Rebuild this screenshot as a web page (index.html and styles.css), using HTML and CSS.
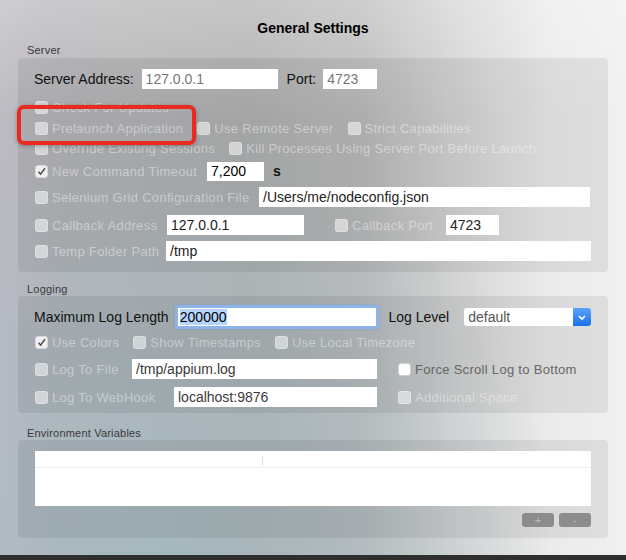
FILE: index.html
```html
<!DOCTYPE html>
<html lang="en">
<head>
  <meta charset="UTF-8" />
  <title>General Settings</title>
  <link rel="stylesheet" href="styles.css">
</head>
<body>
  <div class="window">
    <h1 class="title">General Settings</h1>

    <div class="section-label">Server</div>
    <div class="group server">
      <div class="row addr-row">
        <span class="field-label">Server Address:</span>
        <div class="field dim addr">127.0.0.1</div>
        <span class="field-label port-label">Port:</span>
        <div class="field dim port">4723</div>
      </div>
      <div class="row updates-row">
        <label class="check"><span class="box"></span>Check For Updates</label>
      </div>
      <div class="row flags-row">
        <label class="check"><span class="box"></span>Prelaunch Application</label>
        <label class="check"><span class="box"></span>Use Remote Server</label>
        <label class="check"><span class="box"></span>Strict Capabilities</label>
      </div>
      <div class="row">
        <label class="check"><span class="box"></span>Override Existing Sessions</label>
        <label class="check"><span class="box"></span>Kill Processes Using Server Port Before Launch</label>
      </div>
      <div class="row field-row timeout-row">
        <label class="check col-timeout"><span class="box on"><svg viewBox="0 0 13 13"><path d="M3 6.8l2.4 2.8L10.6 2.6"/></svg></span>New Command Timeout</label>
        <div class="field timeout">7,200</div>
        <span class="unit">s</span>
      </div>
      <div class="row field-row grid-row">
        <label class="check col-grid"><span class="box"></span>Selenium Grid Configuration File</label>
        <div class="field grid-path">/Users/me/nodeconfig.json</div>
      </div>
      <div class="row field-row callback-row">
        <label class="check col-a"><span class="box"></span>Callback Address</label>
        <div class="field callback">127.0.0.1</div>
        <label class="check col-port"><span class="box"></span>Callback Port</label>
        <div class="field callback-port">4723</div>
      </div>
      <div class="row field-row tmp-row">
        <label class="check col-a"><span class="box"></span>Temp Folder Path</label>
        <div class="field tmp">/tmp</div>
      </div>
    </div>

    <div class="section-label logging-label">Logging</div>
    <div class="group logging">
      <div class="row loglen-row">
        <span class="field-label col-len">Maximum Log Length</span>
        <div class="field focus"><span class="selected">200000</span></div>
        <span class="field-label level-label">Log Level</span>
        <div class="select">
          <span class="select-value">default</span>
          <span class="select-arrow"><svg viewBox="0 0 10 7"><path d="M2 2l3 3 3-3"/></svg></span>
        </div>
      </div>
      <div class="row colors-row">
        <label class="check"><span class="box on"><svg viewBox="0 0 13 13"><path d="M3 6.8l2.4 2.8L10.6 2.6"/></svg></span>Use Colors</label>
        <label class="check"><span class="box"></span>Show Timestamps</label>
        <label class="check"><span class="box"></span>Use Local Timezone</label>
      </div>
      <div class="row field-row file-row">
        <label class="check col-file"><span class="box"></span>Log To File</label>
        <div class="field dark log-file">/tmp/appium.log</div>
        <label class="check enabled side"><span class="box white"></span>Force Scroll Log to Bottom</label>
      </div>
      <div class="row field-row hook-row">
        <label class="check col-hook"><span class="box"></span>Log To WebHook</label>
        <div class="field dark hook">localhost:9876</div>
        <label class="check side"><span class="box"></span>Additional Space</label>
      </div>
    </div>

    <div class="section-label env-label">Environment Variables</div>
    <div class="group env">
      <div class="table">
        <div class="table-head"><span class="col-sep"></span></div>
      </div>
      <div class="table-buttons">
        <span class="btn">+</span>
        <span class="btn">-</span>
      </div>
    </div>

    <div class="callout"></div>
  </div>
</body>
</html>
```

FILE: styles.css
```css
* {
  box-sizing: border-box;
}

body {
  margin: 0;
  background: #2f2f2f;
  font-family: "Liberation Sans", Arial, sans-serif;
}

.window {
  position: relative;
  width: 626px;
  height: 555px;
  overflow: hidden;
  padding-top: 18px;
  background:
    linear-gradient(to bottom, rgba(255, 255, 255, 0.28), rgba(255, 255, 255, 0) 120px),
    radial-gradient(ellipse at 25% 100%, rgba(150, 190, 205, 0.45), rgba(150, 190, 205, 0) 60%),
    linear-gradient(to right, #bdbac2 0%, #b6b5b9 8%, #b1b1b1 40%, #bbbbbb 58%, #d6d6d6 74%, #ebebeb 88%, #f0f0f0 100%);
}

.title {
  margin: 0;
  height: 20px;
  line-height: 20px;
  font-size: 14px;
  font-weight: bold;
  text-align: center;
  color: #000;
}

.section-label {
  margin: 5px 0 1px 27px;
  height: 14px;
  line-height: 14px;
  font-size: 11px;
  letter-spacing: 0.2px;
  color: #3a3a3a;
}

.logging-label {
  margin-top: 10px;
  margin-bottom: 0;
}

.env-label {
  margin-top: 13px;
  margin-bottom: 0;
}

.group {
  margin: 0 18px;
  border-radius: 4px;
  background: rgba(0, 0, 0, 0.07);
  padding: 9px 17px 10px 16px;
}

.logging {
  padding-bottom: 5px;
}

.env {
  padding: 11px 17px 11px 17px;
}

.row {
  display: flex;
  align-items: center;
  height: 20px;
  white-space: nowrap;
}

.field-row {
  height: 22px;
}

.addr-row { height: 24px; }
.updates-row { margin-top: 6px; }
.flags-row { margin-top: 1px; }
.timeout-row { margin-top: 2px; }
.grid-row { margin-top: 4px; }
.callback-row { margin-top: 6px; }
.tmp-row { margin-top: 4px; }

.loglen-row { height: 24px; }
.colors-row { margin-top: 3px; }
.file-row { margin-top: 6px; }
.hook-row { margin-top: 6px; }

.field-label {
  font-size: 14px;
  color: #111;
}

.port-label { margin-left: 9px; }
.level-label { margin-left: 9px; }
.col-len { width: 141px; }

/* checkboxes */
.check {
  display: flex;
  align-items: center;
  margin-left: 1px;
  font-size: 13px;
  letter-spacing: 0.3px;
  color: rgba(255, 255, 255, 0.42);
}

.check + .check {
  margin-left: 14px;
}

.box {
  width: 13px;
  height: 13px;
  margin-right: 4px;
  border-radius: 3px;
  background: rgba(255, 255, 255, 0.5);
  border: 1px solid rgba(255, 255, 255, 0.25);
  flex: none;
}

.box.on {
  background: #efefef;
  border-color: #d8d8d8;
}

.box.on svg {
  display: block;
  width: 11px;
  height: 11px;
}

.box.on path {
  fill: none;
  stroke: #444;
  stroke-width: 1.7;
}

.box.white {
  background: #fff;
  border-color: #d0d0d0;
}

.check.enabled {
  color: #666;
}

.col-timeout { width: 172px; }
.col-grid { width: 224px; }
.col-a { width: 132px; }
.col-file { width: 97px; }
.col-hook { width: 139px; }

.check.col-port {
  width: 111px;
  margin-left: 31px;
}

.check.side {
  margin-left: 21px;
}

/* text fields */
.field {
  height: 20px;
  line-height: 20px;
  padding: 0 4px;
  background: #fff;
  font-size: 14px;
  color: #222;
  overflow: hidden;
}

.field.dim { color: #777; }
.field.dark { color: #3a3a3a; }

.addr { width: 136px; margin-left: 8px; }
.port { width: 54px; margin-left: 7px; }
.timeout { width: 57px; height: 19px; line-height: 19px; color: #000; }
.grid-path { width: 331px; }
.callback { width: 137px; }
.callback-port { width: 53px; }
.tmp { width: 428px; }
.log-file { width: 245px; }
.hook { width: 203px; }

.unit {
  margin-left: 9px;
  font-size: 14px;
  font-weight: bold;
  color: #111;
}

.field.focus {
  width: 205px;
  height: 24px;
  line-height: 18px;
  border: 3px solid #8db3e8;
  border-radius: 3px;
  padding: 0 2px;
  color: #000;
  box-shadow: 0 0 2px rgba(90, 140, 220, 0.6);
}

.selected {
  background: #b5d5fd;
}

/* popup */
.select {
  display: flex;
  width: 127px;
  height: 18px;
  margin-left: 15px;
  border-radius: 3px;
  background: #fff;
  overflow: hidden;
}

.select-value {
  flex: 1;
  padding-left: 4px;
  line-height: 18px;
  font-size: 14px;
  color: #555;
}

.select-arrow {
  width: 18px;
  display: flex;
  align-items: center;
  justify-content: center;
  background: linear-gradient(to bottom, #5aa2fb, #1b70ea);
}

.select-arrow svg {
  width: 10px;
  height: 7px;
}

.select-arrow path {
  fill: none;
  stroke: #fff;
  stroke-width: 1.6;
}

/* environment table */
.table {
  height: 55px;
  background: #fff;
}

.table-head {
  position: relative;
  height: 17px;
  border-bottom: 1px solid #eee;
}

.col-sep {
  position: absolute;
  left: 227px;
  top: 5px;
  width: 1px;
  height: 9px;
  background: #ddd;
}

.table-buttons {
  display: flex;
  justify-content: flex-end;
  gap: 5px;
  margin-top: 7px;
}

.btn {
  width: 32px;
  height: 14px;
  border-radius: 3px;
  background: #8c8c8c;
  color: #bdbdbd;
  font-size: 11px;
  line-height: 14px;
  text-align: center;
}

/* annotation */
.callout {
  position: absolute;
  left: 17px;
  top: 105px;
  width: 179px;
  height: 40px;
  border: 4px solid #ea2a1e;
  border-radius: 7px;
  box-shadow: 0 1px 4px rgba(0, 0, 0, 0.3);
}
```
